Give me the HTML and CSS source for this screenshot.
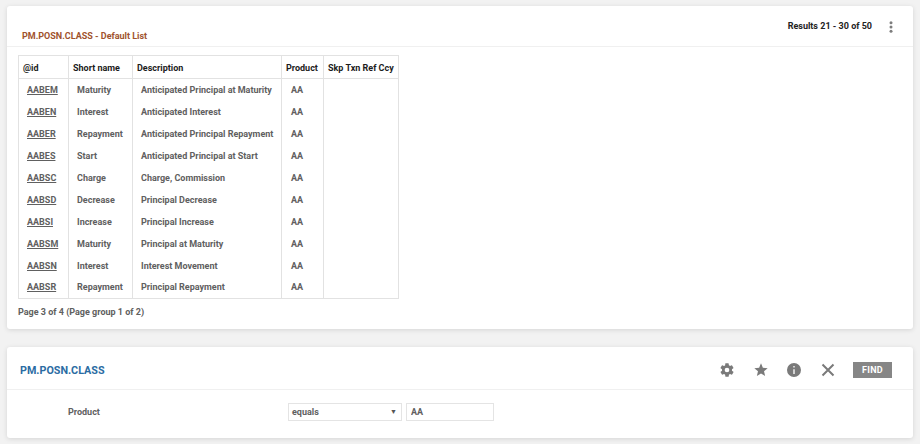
FILE: index.html
```html
<!DOCTYPE html>
<html lang="en">
<head>
<meta charset="utf-8">
<title>PM.POSN.CLASS</title>
<link rel="stylesheet" href="styles.css">
</head>
<body>
<section class="card list-card">
  <header class="list-head">
    <h2 class="list-title">PM.POSN.CLASS - Default List</h2>
    <div class="list-meta">
      <span class="results">Results 21 - 30 of 50</span>
      <svg class="kebab" width="4" height="12" viewBox="0 0 4 12"><circle cx="2" cy="1.7" r="1.5"/><circle cx="2" cy="6" r="1.5"/><circle cx="2" cy="10.3" r="1.5"/></svg>
    </div>
  </header>
  <div class="list-body">
    <table class="grid">
      <thead>
        <tr><th class="c1">@id</th><th class="c2">Short name</th><th class="c3">Description</th><th class="c4">Product</th><th class="c5">Skp Txn Ref Ccy</th></tr>
      </thead>
      <tbody>
        <tr><td><a href="#">AABEM</a></td><td>Maturity</td><td>Anticipated Principal at Maturity</td><td>AA</td><td></td></tr>
        <tr><td><a href="#">AABEN</a></td><td>Interest</td><td>Anticipated Interest</td><td>AA</td><td></td></tr>
        <tr><td><a href="#">AABER</a></td><td>Repayment</td><td>Anticipated Principal Repayment</td><td>AA</td><td></td></tr>
        <tr><td><a href="#">AABES</a></td><td>Start</td><td>Anticipated Principal at Start</td><td>AA</td><td></td></tr>
        <tr><td><a href="#">AABSC</a></td><td>Charge</td><td>Charge, Commission</td><td>AA</td><td></td></tr>
        <tr><td><a href="#">AABSD</a></td><td>Decrease</td><td>Principal Decrease</td><td>AA</td><td></td></tr>
        <tr><td><a href="#">AABSI</a></td><td>Increase</td><td>Principal Increase</td><td>AA</td><td></td></tr>
        <tr><td><a href="#">AABSM</a></td><td>Maturity</td><td>Principal at Maturity</td><td>AA</td><td></td></tr>
        <tr><td><a href="#">AABSN</a></td><td>Interest</td><td>Interest Movement</td><td>AA</td><td></td></tr>
        <tr><td><a href="#">AABSR</a></td><td>Repayment</td><td>Principal Repayment</td><td>AA</td><td></td></tr>
      </tbody>
    </table>
    <p class="pager">Page 3 of 4 (Page group 1 of 2)</p>
  </div>
</section>
<section class="card find-card">
  <header class="find-head">
    <h2 class="find-title">PM.POSN.CLASS</h2>
    <div class="tools">
      <svg class="tool" width="16" height="16" viewBox="0 0 24 24"><path d="M19.4 13c.04-.32.1-.65.1-1s-.06-.68-.1-1l2.1-1.65c.2-.15.25-.42.12-.64l-2-3.46c-.12-.22-.39-.3-.61-.22l-2.49 1c-.52-.4-1.08-.73-1.69-.98l-.38-2.65A.49.49 0 0 0 14 2h-4c-.25 0-.46.18-.49.42l-.38 2.65c-.61.25-1.17.59-1.69.98l-2.49-1c-.23-.09-.49 0-.61.22l-2 3.46c-.13.22-.07.49.12.64L4.6 11c-.04.32-.1.66-.1 1s.06.68.1 1l-2.1 1.65c-.2.15-.25.42-.12.64l2 3.46c.12.22.39.3.61.22l2.49-1c.52.4 1.08.73 1.69.98l.38 2.65c.03.24.24.42.49.42h4c.25 0 .46-.18.49-.42l.38-2.65c.61-.25 1.17-.59 1.69-.98l2.49 1c.23.09.49 0 .61-.22l2-3.46c.12-.22.07-.49-.12-.64L19.4 13zM12 15.5a3.5 3.5 0 1 1 0-7 3.5 3.5 0 0 1 0 7z"/></svg>
      <svg class="tool" width="16" height="16" viewBox="0 0 24 24"><path d="M12 17.27 18.18 21l-1.64-7.03L22 9.24l-7.19-.61L12 2 9.19 8.63 2 9.24l5.46 4.73L5.82 21z"/></svg>
      <svg class="tool" width="16" height="16" viewBox="0 0 24 24"><path fill-rule="evenodd" d="M12 1.5a10.5 10.5 0 1 0 0 21 10.5 10.5 0 0 0 0-21zM11 6h2v2.4h-2zM11 10.8h2V18h-2z"/></svg>
      <svg class="tool" width="16" height="16" viewBox="0 0 16 16"><path class="cross" d="M2.5 2.5l11 11M13.5 2.5l-11 11"/></svg>
      <button class="find-btn" type="button">FIND</button>
    </div>
  </header>
  <form class="find-form">
    <label class="field-label">Product</label>
    <div class="select-box"><span>equals</span><span class="caret">▼</span></div>
    <input class="value-box" type="text" value="AA">
  </form>
</section>
</body>
</html>
```
FILE: styles.css
```css
* { box-sizing: border-box; }
html, body { height: 100%; }
body {
  margin: 0;
  padding: 6px 7px 0;
  background: #f2f2f2;
  font-family: Roboto, "Liberation Sans", sans-serif;
  font-size: 9px;
  font-weight: 700;
  color: #606060;
  overflow: hidden;
}
.card {
  background: #fff;
  border-radius: 3px;
  box-shadow: 0 1px 5px rgba(0,0,0,.12);
}
.list-card { height: 323px; }
.find-card { height: 91px; margin-top: 18px; }
.list-head {
  height: 41px;
  border-bottom: 1px solid #f0f0f0;
  display: flex;
  justify-content: space-between;
  padding: 0 20px 0 15px;
}
.list-title {
  margin: 24px 0 0;
  font-size: 9px;
  line-height: 12px;
  color: #a0522d;
}
.list-meta { display: flex; align-items: flex-start; padding-top: 14px; gap: 17px; }
.results { color: #222; line-height: 12px; }
.kebab { fill: #7d7d7d; margin-top: 1px; }
.list-body { padding: 8px 11px 0; }
.grid {
  border-collapse: collapse;
  border: 1px solid #e2e2e2;
  table-layout: fixed;
  width: 380px;
}
.grid th {
  height: 23px;
  padding: 1px 0 0 4px;
  text-align: left;
  color: #1c1c1c;
  border: 1px solid #e2e2e2;
  white-space: nowrap;
}
.grid td {
  height: 22px;
  padding: 0 0 0 8px;
  border-left: 1px solid #e2e2e2;
  border-right: 1px solid #e2e2e2;
  white-space: nowrap;
}
.grid td:nth-child(4) { padding-left: 9px; }
.grid a { color: #606060; }
.c1 { width: 50px; }
.c2 { width: 64px; }
.c3 { width: 149px; }
.c4 { width: 42px; }
.c5 { width: 75px; }
.pager { margin: 7px 0 0; line-height: 12px; }
.find-head {
  height: 43px;
  border-bottom: 1px solid #f0f0f0;
  display: flex;
  align-items: center;
  justify-content: space-between;
  padding: 4px 21px 0 13px;
}
.find-title { margin: 0; font-size: 10.75px; color: #2b6ca3; }
.tools { display: flex; align-items: center; }
.tool { fill: #7a7a7a; margin-right: 17.5px; }
.cross { fill: none; stroke: #7a7a7a; stroke-width: 2; }
.find-btn {
  width: 39px;
  height: 16px;
  padding: 0;
  border: 0;
  background: #868686;
  color: #fff;
  font: 700 9px Roboto, sans-serif;
  letter-spacing: .3px;
}
.find-form {
  display: flex;
  align-items: center;
  padding: 13px 0 0 61px;
}
.field-label { width: 220px; }
.select-box {
  width: 114px;
  height: 18px;
  border: 1px solid #e4e4e4;
  display: flex;
  justify-content: space-between;
  align-items: center;
  padding: 0 4px 0 3px;
}
.caret { font-size: 7px; color: #555; }
.value-box {
  width: 88px;
  height: 18px;
  margin-left: 4px;
  border: 1px solid #e4e4e4;
  padding: 0 4px;
  font: 700 9px Roboto, sans-serif;
  color: #606060;
  outline: none;
}
```
